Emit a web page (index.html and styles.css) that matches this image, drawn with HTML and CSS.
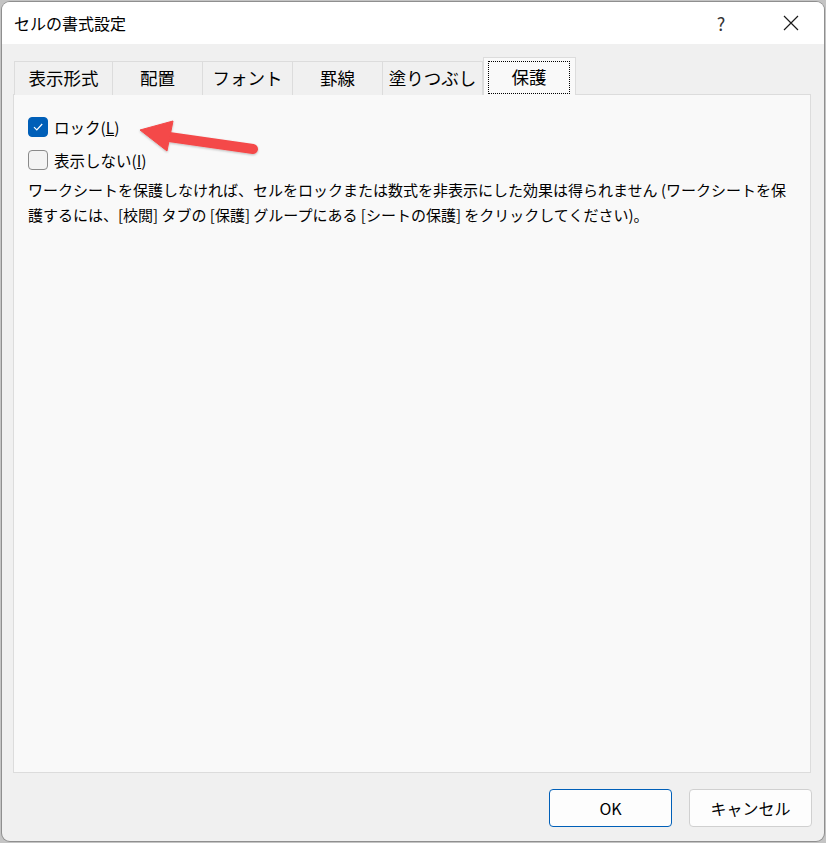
FILE: index.html
```html
<!DOCTYPE html>
<html lang="ja">
<head>
  <meta charset="UTF-8">
  <title>セルの書式設定</title>
  <link rel="stylesheet" href="styles.css">
</head>
<body>
  <div class="window">
    <!-- title bar -->
    <div class="titlebar">
      <div class="title">セルの書式設定</div>
      <div class="help">?</div>
      <div class="close">
        <svg width="16" height="16" viewBox="0 0 16 16">
          <path d="M1 1 L15 15 M15 1 L1 15" stroke="#1a1a1a" stroke-width="1.2" fill="none"/>
        </svg>
      </div>
    </div>

    <div class="content">
      <div class="tabs">
        <div class="tab w99">表示形式</div>
        <div class="tab w90">配置</div>
        <div class="tab w90">フォント</div>
        <div class="tab w90">罫線</div>
        <div class="tab w100">塗りつぶし</div>
        <div class="tab selected"><span class="focus">保護</span></div>
      </div>

      <div class="panel">
        <label class="check-row">
          <span class="box checked">
            <svg width="12" height="12" viewBox="0 0 12 12">
              <path d="M2 6.2 L4.8 9 L10.2 3" stroke="#fff" stroke-width="1.2" fill="none"/>
            </svg>
          </span>
          <span>ロック(<u>L</u>)</span>
        </label>
        <label class="check-row">
          <span class="box"></span>
          <span>表示しない(<u>I</u>)</span>
        </label>
        <p class="note">ワークシートを保護しなければ、セルをロックまたは数式を非表示にした効果は得られません (ワークシートを保護するには、[校閲] タブの [保護] グループにある [シートの保護] をクリックしてください)。</p>
      </div>
    </div>

    <div class="footer">
      <button class="btn primary">OK</button>
      <button class="btn">キャンセル</button>
    </div>
  </div>

  <!-- annotation arrow -->
  <svg class="arrow" width="826" height="843" viewBox="0 0 826 843">
    <defs>
      <filter id="shade" x="-20%" y="-20%" width="140%" height="160%">
        <feDropShadow dx="0" dy="1" stdDeviation="1" flood-color="#000" flood-opacity="0.25"/>
      </filter>
    </defs>
    <g filter="url(#shade)" fill="#f44848" stroke="#f44848">
      <line x1="162" y1="136" x2="253" y2="149" stroke-width="10" stroke-linecap="round"/>
      <polygon points="140,130 173,121 167,151" stroke-width="1" stroke-linejoin="round"/>
    </g>
  </svg>
</body>
</html>
```

FILE: styles.css
```css
body {
  margin: 0;
  width: 826px;
  height: 843px;
  background: #c4c4c4;
  font-family: "Noto Sans CJK JP", "Noto Sans", sans-serif;
  color: #1a1a1a;
  position: relative;
  overflow: hidden;
}

.window {
  position: absolute;
  left: 2px;
  top: 2px;
  width: 822px;
  height: 839px;
  border-radius: 8px;
  background: #f0f0f0;
  box-shadow: 0 0 0 1px #8f8f8f;
  overflow: hidden;
  display: flex;
  flex-direction: column;
}

.titlebar {
  height: 42px;
  background: #fff;
  display: flex;
  align-items: center;
  padding-left: 12px;
  flex-shrink: 0;
}

.title {
  font-size: 16px;
  flex: 1;
  color: #000;
}

.help {
  font-size: 18px;
  color: #333;
  width: 20px;
  text-align: center;
  margin-right: 52px;
}

.close {
  width: 16px;
  height: 16px;
  margin-right: 25px;
  display: flex;
}

.content {
  flex: 1;
  display: flex;
  flex-direction: column;
  padding: 13px 13px 0 11px;
}

.tabs {
  display: flex;
  align-items: flex-end;
  padding-left: 1px;
  position: relative;
  z-index: 1;
  margin-bottom: -1px;
}

.tab {
  height: 34px;
  box-sizing: border-box;
  border: 1px solid #dcdcdc;
  border-bottom: none;
  border-left: none;
  background: #f0f0f0;
  font-size: 17.5px;
  color: #000;
  display: flex;
  align-items: center;
  justify-content: center;
  padding-bottom: 2px;
}

.tab:first-child { border-left: 1px solid #dcdcdc; }

.w99 { width: 99px; }
.w90 { width: 90px; }
.w100 { width: 100px; }

.tab.selected {
  width: 93px;
  height: 38px;
  background: #f9f9f9;
  border-left: 1px solid #dcdcdc;
  padding: 3px 5px 1px 4px;
  align-items: stretch;
}

.focus {
  flex: 1;
  border: 1px dotted #000;
  display: flex;
  align-items: center;
  justify-content: center;
  padding-bottom: 2px;
}

.panel {
  flex: 1;
  background: #f9f9f9;
  border: 1px solid #dcdcdc;
  padding: 21px 14px 0 14px;
}

.check-row {
  display: flex;
  align-items: center;
  gap: 6px;
  height: 22px;
  margin-bottom: 11px;
  font-size: 15.5px;
  color: #000;
}

.box {
  width: 20px;
  height: 20px;
  box-sizing: border-box;
  border-radius: 4px;
  border: 1px solid #8a8a8a;
  background: #f3f3f3;
  display: flex;
  align-items: center;
  justify-content: center;
}

.box.checked {
  background: #005fb8;
  border-color: #005fb8;
}

.note {
  margin: -5px 0 0 0;
  font-size: 15px;
  line-height: 25px;
  color: #000;
}

.footer {
  flex-shrink: 0;
  display: flex;
  justify-content: flex-end;
  gap: 17px;
  padding: 16px 12px 14px 0;
}

.btn {
  width: 123px;
  height: 38px;
  border: 1px solid #d0d0d0;
  border-radius: 4px;
  background: #fdfdfd;
  font-family: "Noto Sans CJK JP", "Noto Sans", sans-serif;
  font-size: 16px;
  color: #000;
}

.btn.primary {
  border-color: #005fb8;
}

.arrow {
  position: absolute;
  left: 0;
  top: 0;
  pointer-events: none;
}
```
